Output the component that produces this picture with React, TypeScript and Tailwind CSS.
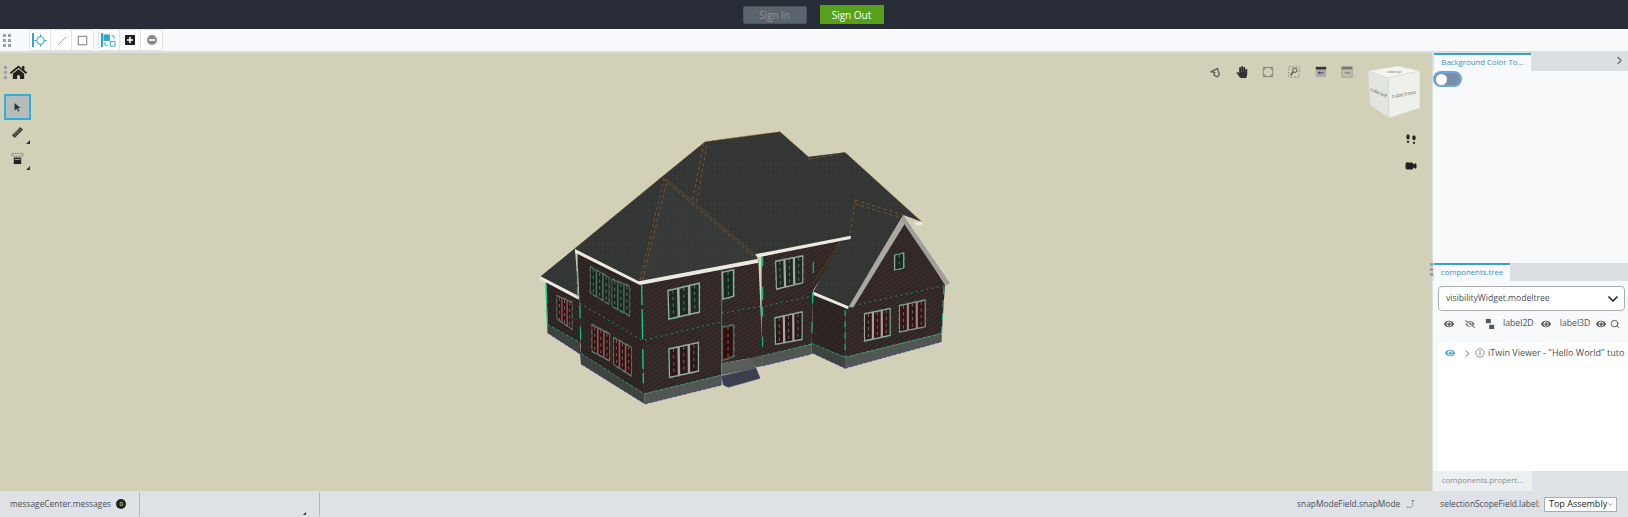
import { ChevronDown, ChevronRight, Search, Video } from 'lucide-react'
import { FaEye, FaEyeSlash, FaHandPaper, FaHome } from 'react-icons/fa'

type Pt = [number, number]

const font = { fontFamily: '"Open Sans", "Noto Sans", sans-serif' }

const pts = (list: Pt[]) => list.map((p) => p.join(',')).join(' ')

// siding + roof polygons, coordinates are 3x the screen pixels
const walls: Pt[][] = [
  [[78, 478], [178, 535], [182, 672], [82, 615]],
  [[172, 400], [368, 490], [372, 822], [183, 705], [178, 535]],
  [[365, 490], [715, 420], [728, 712], [680, 716], [605, 730], [605, 765], [372, 822]],
  [[725, 410], [985, 352], [880, 510], [875, 672], [725, 710]],
  [[880, 515], [978, 565], [975, 712], [875, 672]],
  [[978, 565], [1150, 295], [1275, 495], [1265, 640], [975, 712]],
]

const footing: Pt[][] = [
  [[82, 612], [180, 668], [183, 700], [372, 820], [375, 852], [183, 732], [180, 702], [82, 638]],
  [[372, 820], [605, 765], [605, 795], [375, 852]],
  [[680, 716], [725, 706], [727, 738], [710, 742]],
  [[725, 708], [875, 672], [875, 702], [727, 738]],
  [[875, 670], [975, 712], [975, 745], [875, 698]],
  [[975, 712], [1265, 640], [1265, 665], [975, 745]],
]

const trim: Pt[][] = [
  [[60, 468], [176, 528], [176, 539], [60, 478]],
  [[165, 387], [356, 484], [712, 417], [716, 428], [360, 495], [165, 398]],
  [[705, 403], [992, 347], [992, 357], [712, 412]],
  [[880, 515], [985, 559], [985, 568], [880, 525]],
  [[1180, 308], [1207, 305], [1205, 315], [1190, 316]],
]

const greenLines: [number, number, number, number, number, string][] = [
  [365, 495, 370, 790, 4, '60 12 90 30'],
  [78, 490, 82, 610, 4, '60 8'],
  [172, 405, 172, 530, 3, '40 8'],
  [180, 555, 182, 670, 3, '40 25'],
  [605, 450, 605, 765, 2, 'none'],
  [728, 410, 728, 680, 3, '30 60 40 20'],
  [880, 425, 875, 670, 3, '35 55'],
  [975, 570, 975, 710, 3, '18 16'],
  [1272, 500, 1265, 640, 3, '22 18'],
  [180, 550, 368, 662, 2, '6 10'],
  [375, 660, 605, 605, 2, '6 10'],
  [605, 580, 725, 558, 2, '6 10'],
  [735, 558, 878, 528, 2, '6 10'],
  [985, 560, 1272, 497, 2, '6 10'],
  [82, 612, 180, 668, 2, '10 6'],
  [183, 700, 372, 822, 2, '10 6'],
  [372, 822, 605, 765, 2, '10 6'],
  [725, 708, 875, 672, 2, '10 6'],
  [875, 670, 975, 712, 2, '10 6'],
  [975, 712, 1265, 640, 2, '10 6'],
]

const blueLines: [number, number, number, number][] = [
  [82, 638, 180, 702],
  [183, 732, 375, 852],
  [375, 852, 605, 795],
  [727, 738, 875, 702],
  [875, 698, 975, 745],
  [975, 745, 1265, 665],
]

const orangeLines: [number, number, number, number, string][] = [
  [165, 385, 555, 65, '3 3'],
  [555, 65, 780, 35, '14 6'],
  [780, 35, 865, 110, '3 3'],
  [865, 118, 975, 97, '14 6'],
  [975, 97, 1205, 305, '3 3'],
  [360, 480, 432, 175, '10 8'],
  [368, 480, 442, 178, '10 8'],
  [442, 178, 708, 405, '3 3'],
  [432, 178, 700, 408, '10 8'],
  [518, 238, 552, 70, '10 8'],
  [530, 245, 562, 70, '10 8'],
  [1005, 240, 1150, 285, '10 8'],
  [1005, 252, 1140, 292, '10 8'],
  [1005, 240, 992, 340, '10 8'],
  [965, 360, 880, 490, '5 5'],
]

type Win = { q: [Pt, Pt, Pt, Pt]; n: number; c: string; frame?: string }

const windows: Win[] = [
  { q: [[442, 510], [540, 487], [540, 578], [445, 600]], n: 3, c: '#1a2a1e' },
  { q: [[445, 685], [537, 665], [537, 755], [447, 775]], n: 3, c: '#2a1816' },
  { q: [[605, 455], [643, 447], [643, 530], [607, 540]], n: 1, c: '#142c1c' },
  { q: [[765, 422], [850, 405], [850, 490], [768, 510]], n: 3, c: '#1a2a1e' },
  { q: [[763, 592], [848, 573], [848, 660], [765, 675]], n: 3, c: '#2a1816' },
  { q: [[1032, 580], [1112, 563], [1112, 648], [1032, 665]], n: 3, c: '#331816' },
  { q: [[1137, 555], [1217, 538], [1217, 622], [1137, 638]], n: 3, c: '#331313', frame: '#8f8f8b' },
  { q: [[1122, 405], [1153, 397], [1153, 445], [1122, 452]], n: 1, c: '#142c1c' },
  { q: [[210, 438], [268, 470], [268, 555], [210, 520]], n: 3, c: '#142a1c', frame: '#5f6460' },
  { q: [[275, 475], [330, 497], [330, 590], [275, 560]], n: 3, c: '#142a1c', frame: '#5f6460' },
  { q: [[215, 612], [270, 640], [270, 725], [215, 695]], n: 3, c: '#3c0f0f', frame: '#74706c' },
  { q: [[280, 650], [335, 680], [335, 770], [280, 735]], n: 3, c: '#3c0f0f', frame: '#74706c' },
  { q: [[110, 525], [157, 545], [157, 630], [110, 598]], n: 3, c: '#3c0f0f', frame: '#74706c' },
  { q: [[605, 620], [643, 612], [643, 710], [605, 725]], n: 1, c: '#340c0c', frame: '#5e5a56' },
]

function lerp(a: Pt, b: Pt, t: number): Pt {
  return [a[0] + (b[0] - a[0]) * t, a[1] + (b[1] - a[1]) * t]
}

function HouseWindow({ q, n, c, frame = '#a5a5a2' }: Win) {
  const [tl, tr, br, bl] = q
  const panes = Array.from({ length: n }, (_, i) => i)
  return (
    <g>
      <polygon points={pts(q)} fill={frame} stroke="#12c08c" strokeWidth={1.5} strokeDasharray="10 12" />
      {panes.map((i) => {
        const a = (i + 0.12) / n
        const b = (i + 0.88) / n
        const pane: Pt[] = [
          lerp(lerp(tl, tr, a), lerp(bl, br, a), 0.05),
          lerp(lerp(tl, tr, b), lerp(bl, br, b), 0.05),
          lerp(lerp(tl, tr, b), lerp(bl, br, b), 0.95),
          lerp(lerp(tl, tr, a), lerp(bl, br, a), 0.95),
        ]
        const top = lerp(pane[0], pane[1], 0.5)
        const bottom = lerp(pane[3], pane[2], 0.5)
        return (
          <g key={i}>
            <polygon points={pts(pane)} fill={c} />
            <line x1={top[0]} y1={top[1]} x2={bottom[0]} y2={bottom[1]} stroke="#8f8f8b" strokeWidth={2} strokeDasharray="10 10" />
          </g>
        )
      })}
    </g>
  )
}

function House() {
  return (
    <svg viewBox="0 0 1350 900" className="h-[300px] w-[450px]">
      <defs>
        <pattern id="siding" width="11" height="11" patternUnits="userSpaceOnUse" patternTransform="rotate(-32)">
          <rect width="11" height="11" fill="#392c2a" />
          <rect width="11" height="4" fill="#2a2322" />
        </pattern>
        <pattern id="sidingDark" width="11" height="11" patternUnits="userSpaceOnUse" patternTransform="rotate(28)">
          <rect width="11" height="11" fill="#322725" />
          <rect width="11" height="4" fill="#272120" />
        </pattern>
        <pattern id="shingle" width="14" height="10" patternUnits="userSpaceOnUse">
          <rect width="14" height="10" fill="#343636" />
          <rect width="7" height="3" fill="#303232" />
          <rect x="7" y="5" width="7" height="3" fill="#393b3b" />
        </pattern>
      </defs>

      {walls.map((w, i) => (
        <polygon key={i} points={pts(w)} fill={i < 2 || i === 4 ? 'url(#sidingDark)' : 'url(#siding)'} />
      ))}
      {footing.map((f, i) => (
        <polygon key={i} points={pts(f)} fill={i === 0 || i === 4 ? '#3f4340' : '#535753'} />
      ))}

      {/* steps */}
      <polygon points="605,730 690,715 710,745 605,765" fill="#5a5e5a" />
      <polygon points="605,768 708,745 720,775 625,802 610,795" fill="#3e4140" stroke="#2433a8" strokeWidth="1.5" />
      <line x1="608" y1="780" x2="714" y2="758" stroke="#2433a8" strokeWidth="1.5" />
      <line x1="612" y1="790" x2="718" y2="767" stroke="#2433a8" strokeWidth="1.5" />

      {/* roof */}
      <polygon
        points="60,470 165,385 420,175 555,65 780,35 865,110 975,97 1205,305 1150,285 985,560 880,515 965,357 712,405 712,420 360,490 165,390 176,530"
        fill="url(#shingle)"
      />
      <polygon points="360,490 440,175 710,405 712,420" fill="#3e4040" opacity="0.4" />

      {trim.map((t, i) => (
        <polygon key={i} points={pts(t)} fill="#ece9e0" />
      ))}
      <polygon points="985,562 1150,285 1158,305 1000,562" fill="#a9a8a3" />
      <polygon points="1150,285 1290,490 1278,497 1148,305" fill="#a09f9a" />

      {orangeLines.map(([x1, y1, x2, y2, d], i) => (
        <line key={i} x1={x1} y1={y1} x2={x2} y2={y2} stroke="#a85f1c" strokeWidth={2} strokeDasharray={d} />
      ))}
      {greenLines.map(([x1, y1, x2, y2, w, d], i) => (
        <line key={i} x1={x1} y1={y1} x2={x2} y2={y2} stroke="#12c890" strokeWidth={w} strokeDasharray={d} />
      ))}
      {blueLines.map(([x1, y1, x2, y2], i) => (
        <line key={i} x1={x1} y1={y1} x2={x2} y2={y2} stroke="#2433a8" strokeWidth={2} strokeDasharray="10 5" />
      ))}
      {windows.map((w, i) => (
        <HouseWindow key={i} {...w} />
      ))}
    </svg>
  )
}

function Cube() {
  return (
    <svg viewBox="0 0 60 56" className="h-[56px] w-[60px]">
      <polygon points="1,5 31,0 53,5 21,12" fill="#f4f5f3" stroke="#d9dad4" strokeWidth="0.5" />
      <polygon points="1,5 21,12 22,52 3,39" fill="#e3e5e1" stroke="#cfd0c8" strokeWidth="0.5" />
      <polygon points="21,12 53,5 53,42 22,52" fill="#eef0ec" stroke="#cfd0c8" strokeWidth="0.5" />
      <text x="37" y="30" textAnchor="middle" fontSize="5" fill="#666" transform="rotate(-10 37 30)" style={font}>cube.front</text>
      <text x="11" y="28" textAnchor="middle" fontSize="4.5" fill="#555" transform="rotate(24 11 28)" style={font}>cube.left</text>
      <text x="27" y="7" textAnchor="middle" fontSize="3.5" fill="#666" style={font}>cube.top</text>
    </svg>
  )
}

function GripDots({ cols }: { cols: 1 | 2 }) {
  return (
    <div className={cols === 2 ? 'grid grid-cols-2 gap-x-[2px] gap-y-[2px]' : 'grid grid-cols-1 gap-y-[2px]'}>
      {Array.from({ length: cols * 3 }, (_, i) => (
        <span key={i} className="h-[3px] w-[3px] bg-[#9aa0a6]" />
      ))}
    </div>
  )
}

function ToolCell({ active, children }: { active?: boolean; children: React.ReactNode }) {
  return (
    <div className="relative flex h-[20px] w-[21px] items-center justify-center border-r border-[#dfe2e6] bg-white last:border-r-0">
      {active ? <span className="absolute left-[2px] top-[3px] h-[14px] w-[1.5px] bg-[#3a9fd0]" /> : null}
      {children}
    </div>
  )
}

function ToolGroup({ children }: { children: React.ReactNode }) {
  return <div className="flex rounded-[2px] border border-[#dfe2e6] bg-white">{children}</div>
}

function ViewIcon({ children }: { children: React.ReactNode }) {
  return <div className="flex h-[16px] w-[26.4px] items-center justify-center">{children}</div>
}

function Corner() {
  return <span className="absolute bottom-[1px] right-[1px] h-0 w-0 border-b-[4px] border-l-[4px] border-b-[#333] border-l-transparent" />
}

export default function App() {
  return (
    <div className="flex h-[517px] w-[1628px] flex-col overflow-hidden text-[#4a4f55]" style={font}>
      <header className="flex h-[29px] items-center justify-center gap-[13px] bg-[#282d37] pr-[2px]">
        <button className="h-[18px] w-[64px] rounded-[2px] border border-[#4d555d] bg-[#5b646c] text-[10px] leading-none text-[#8c9297]">Sign In</button>
        <button className="h-[19px] w-[64px] bg-[#56a01c] text-[10px] leading-none text-white">Sign Out</button>
      </header>

      <div className="flex h-[24px] items-center gap-[4px] border-b-2 border-[#dcdfe2] bg-[#f8f9fb] pl-[3px]">
        <div className="mr-[14px]"><GripDots cols={2} /></div>
        <ToolGroup>
          <ToolCell active>
            <svg viewBox="0 0 14 14" className="ml-[1px] h-[13px] w-[13px]" fill="none" stroke="#2ea8d5" strokeWidth="1.2">
              <circle cx="7" cy="7" r="4" />
              <path d="M7 0.5v2.5M7 11v2.5M0.5 7H3M11 7h2.5" />
            </svg>
          </ToolCell>
          <ToolCell>
            <svg viewBox="0 0 14 14" className="h-[13px] w-[13px]" fill="none" stroke="#9a9a9a"><path d="M3 12 12 3" /></svg>
          </ToolCell>
          <ToolCell>
            <svg viewBox="0 0 14 14" className="h-[13px] w-[13px]" fill="none" stroke="#9a9a9a" strokeWidth="1.4"><rect x="2.5" y="2.5" width="9" height="9" /></svg>
          </ToolCell>
        </ToolGroup>
        <ToolGroup>
          <ToolCell active>
            <svg viewBox="0 0 14 14" className="ml-[1px] h-[13px] w-[13px]" fill="none" stroke="#2ea8d5">
              <rect x="1" y="1" width="6" height="6" fill="#2ea8d5" />
              <rect x="8" y="8" width="5" height="5" />
              <path d="M9 2h3v3M5 12H2V9" />
            </svg>
          </ToolCell>
          <ToolCell>
            <svg viewBox="0 0 14 14" className="h-[14px] w-[14px]"><rect x="2" y="2" width="10" height="10" fill="#222" /><path d="M7 4v6M4 7h6" stroke="#fff" strokeWidth="1.6" /></svg>
          </ToolCell>
          <ToolCell>
            <svg viewBox="0 0 14 14" className="h-[14px] w-[14px]"><circle cx="7" cy="7" r="5" fill="#8b8b8b" /><path d="M4 7h6" stroke="#fff" strokeWidth="1.6" /></svg>
          </ToolCell>
        </ToolGroup>
      </div>

      <main className="flex min-h-0 flex-1">
        <section className="relative min-w-0 flex-1 bg-[#d3d0b8]">
          <div className="absolute left-[4px] top-[11px] flex items-center gap-[3px]">
            <GripDots cols={1} />
            <FaHome className="h-[17px] w-[17px] text-[#222]" />
          </div>

          <div className="absolute left-[4px] top-[41px] flex flex-col items-center">
            <div className="flex h-[26px] w-[27px] items-center justify-center border-2 border-[#2eb0dc] bg-[#b6bcb9]">
              <svg viewBox="0 0 12 14" className="h-[11px] w-[9px]"><path d="M2 1v10l3-2.500 2 4 1.500-.7-2-4h3.500z" fill="#333" /></svg>
            </div>
            <div className="relative -mt-[1px] flex h-[26px] w-[27px] items-center justify-center">
              <svg viewBox="0 0 14 14" className="h-[13px] w-[13px]"><path d="M1 10 10 1l3 3-9 9z" fill="#444" /><path d="M4 8l1 1M6 6l1 1M8 4l1 1" stroke="#d3d0b8" /></svg>
              <Corner />
            </div>
            <div className="relative flex h-[26px] w-[27px] items-center justify-center">
              <svg viewBox="0 0 14 14" className="h-[13px] w-[13px]"><path d="M1 1.500h12v3H1z" fill="none" stroke="#777" strokeDasharray="2 1" /><path d="M3 6h8v7H3z" fill="#222" /><path d="M4 8h6" stroke="#aaa" /></svg>
              <Corner />
            </div>
          </div>

          <div className="absolute left-[1202px] top-[11px] flex items-center">
            <ViewIcon>
              <svg viewBox="0 0 14 14" className="h-[11px] w-[11px]" fill="none" stroke="#666" strokeWidth="1.800"><path d="M1.500 6l8-4 2.500 8-3 2.500-4-2 1-3.500z" /></svg>
            </ViewIcon>
            <ViewIcon><FaHandPaper className="h-[12px] w-[12px] text-[#333]" /></ViewIcon>
            <ViewIcon>
              <svg viewBox="0 0 14 14" className="h-[12px] w-[12px]"><rect x="1" y="1" width="12" height="12" fill="#8a8d88" /><circle cx="7" cy="7" r="5" fill="#d3d0b8" /></svg>
            </ViewIcon>
            <ViewIcon>
              <svg viewBox="0 0 14 14" className="h-[12px] w-[12px]" fill="none" stroke="#777"><rect x="1" y="1" width="12" height="12" strokeDasharray="2 2" /><circle cx="8" cy="5" r="2.500" stroke="#444" /><path d="M6 7 3 11" stroke="#444" strokeWidth="1.500" /></svg>
            </ViewIcon>
            <ViewIcon>
              <svg viewBox="0 0 14 14" className="h-[12px] w-[12px]"><rect x="1" y="1" width="12" height="12" fill="#aaa" /><rect x="1" y="1" width="12" height="3" fill="#333" /><path d="M4 8h6M6 6.500 4 8l2 1.500" stroke="#333" fill="none" /></svg>
            </ViewIcon>
            <ViewIcon>
              <svg viewBox="0 0 14 14" className="h-[12px] w-[12px]"><rect x="1" y="1" width="12" height="12" fill="#c2c0ab" stroke="#999" /><rect x="1" y="1" width="12" height="3" fill="#777" /><path d="M4 8h6M8 6.500 10 8 8 9.500" stroke="#777" fill="none" /></svg>
            </ViewIcon>
          </div>

          <div className="absolute left-[1367px] top-[13px]"><Cube /></div>

          <div className="absolute left-[1405px] top-[81px] flex flex-col items-center gap-[15px]">
            <svg viewBox="0 0 14 12" className="h-[11px] w-[12px]" fill="#222">
              <ellipse cx="3.500" cy="3" rx="2" ry="3" />
              <rect x="2.200" y="7.500" width="2.600" height="2.500" rx="1" />
              <ellipse cx="10.500" cy="4" rx="2" ry="3" />
              <rect x="9.200" y="8.500" width="2.600" height="2.500" rx="1" />
            </svg>
            <Video className="h-[12px] w-[12px] fill-[#222] text-[#222]" />
          </div>

          <div className="absolute left-[520px] top-[67px]"><House /></div>
        </section>

        <aside className="relative flex w-[196px] flex-col border-l border-[#dcdfe2] bg-[#f8f9fb]">
          <div className="flex h-[18px] bg-[#dcdfe2]">
            <div className="ml-[1px] flex w-[97px] items-center justify-center whitespace-nowrap border-t-2 border-[#3a9fd0] bg-[#f8f9fb] text-[7.800px] text-[#3a8fc0]">Background Color To...</div>
            <ChevronRight className="ml-auto mr-[2px] mt-[1px] h-[13px] w-[13px] text-[#666]" />
          </div>
          <div className="h-[192px]">
            <div className="flex h-[16px] w-[29px] items-center rounded-full border-2 border-[#6aa9d8] bg-[#7b8ea6] pl-[1px]">
              <span className="h-[11px] w-[11px] rounded-full bg-white" />
            </div>
          </div>

          <div className="absolute -left-[3px] top-[210px]"><GripDots cols={1} /></div>

          <div className="flex h-[18px] bg-[#dcdfe2]">
            <div className="ml-[1px] flex w-[76px] items-center justify-center whitespace-nowrap border-t-2 border-[#3a9fd0] bg-[#f8f9fb] text-[7.800px] text-[#3a8fc0]">components.tree</div>
          </div>

          <div className="flex min-h-0 flex-1 flex-col pl-[5px]">
            <div className="mt-[5px] flex h-[25px] w-[187px] items-center justify-between rounded-[4px] border border-[#a9adb2] bg-white pl-[7px] pr-[3px] text-[8.600px]">
              visibilityWidget.modeltree
              <ChevronDown className="h-[16px] w-[16px] text-[#222]" strokeWidth={2.500} />
            </div>
            <div className="flex h-[32px] items-center whitespace-nowrap pb-[7px] pl-[6px] text-[8.700px]">
              <FaEye className="h-[10px] w-[10px] text-[#555]" />
              <FaEyeSlash className="ml-[11px] h-[10px] w-[10px] text-[#777]" />
              <svg viewBox="0 0 12 14" className="ml-[10px] h-[12px] w-[10px]" fill="#555"><rect x="1" y="1" width="6" height="5" /><rect x="5" y="8" width="6" height="5" /></svg>
              <span className="ml-[8px]">label2D</span>
              <FaEye className="ml-[7px] h-[10px] w-[10px] text-[#555]" />
              <span className="ml-[9px]">label3D</span>
              <FaEye className="ml-[6px] h-[10px] w-[10px] text-[#555]" />
              <Search className="ml-[4px] h-[10px] w-[10px] text-[#444]" />
            </div>
            <div className="flex flex-1 items-start overflow-hidden whitespace-nowrap bg-white pt-[2px] text-[9px]">
              <div className="flex h-[16px] items-center">
                <FaEye className="ml-[7px] h-[10px] w-[10px] text-[#4aa3d8]" />
                <ChevronRight className="ml-[7px] h-[11px] w-[11px] text-[#555]" />
                <svg viewBox="0 0 12 12" className="ml-[2px] h-[10px] w-[10px]" fill="none" stroke="#777"><circle cx="6" cy="6" r="5" /><path d="M6 3v6" /></svg>
                <span className="ml-[3px]">iTwin Viewer - "Hello World" tuto</span>
              </div>
            </div>
          </div>

          <div className="flex h-[20px] bg-[#dee1e5]">
            <div className="flex w-[99px] items-center justify-center whitespace-nowrap bg-[#eceef0] text-[7.800px] text-[#8a8f95]">components.propert...</div>
          </div>
        </aside>
      </main>

      <footer className="flex h-[26px] items-center whitespace-nowrap bg-[#dee1e5] text-[8.400px] text-[#4a4f55]">
        <div className="flex h-[24px] w-[140px] items-center border-r border-[#b5b9bd] pl-[10px]">
          messageCenter.messages
          <span className="ml-[5px] flex h-[10px] w-[10px] shrink-0 items-center justify-center rounded-full bg-[#222] text-[6px] text-white">0</span>
        </div>
        <div className="relative h-[24px] w-[180px] border-r border-[#b5b9bd]">
          <span className="absolute bottom-[1px] right-[13px] h-0 w-0 border-b-[3px] border-l-[3px] border-b-[#333] border-l-transparent" />
        </div>
        <div className="ml-auto flex items-center pr-[11px]">
          <span>snapModeField.snapMode</span>
          <svg viewBox="0 0 12 12" className="ml-[6px] h-[10px] w-[10px]" fill="none" stroke="#666"><path d="M1 10h4c2 0 3-1 3-3V2" strokeDasharray="2 1" /><path d="M7 2h3" /></svg>
          <span className="ml-[24px]">selectionScopeField.label:</span>
          <div className="ml-[4px] flex h-[15px] w-[73px] items-center justify-between border border-[#a9adb2] bg-white pl-[4px] pr-[2px] text-[9px] text-[#222]">
            Top Assembly
            <ChevronDown className="h-[9px] w-[9px] text-[#555]" />
          </div>
        </div>
      </footer>
    </div>
  )
}
